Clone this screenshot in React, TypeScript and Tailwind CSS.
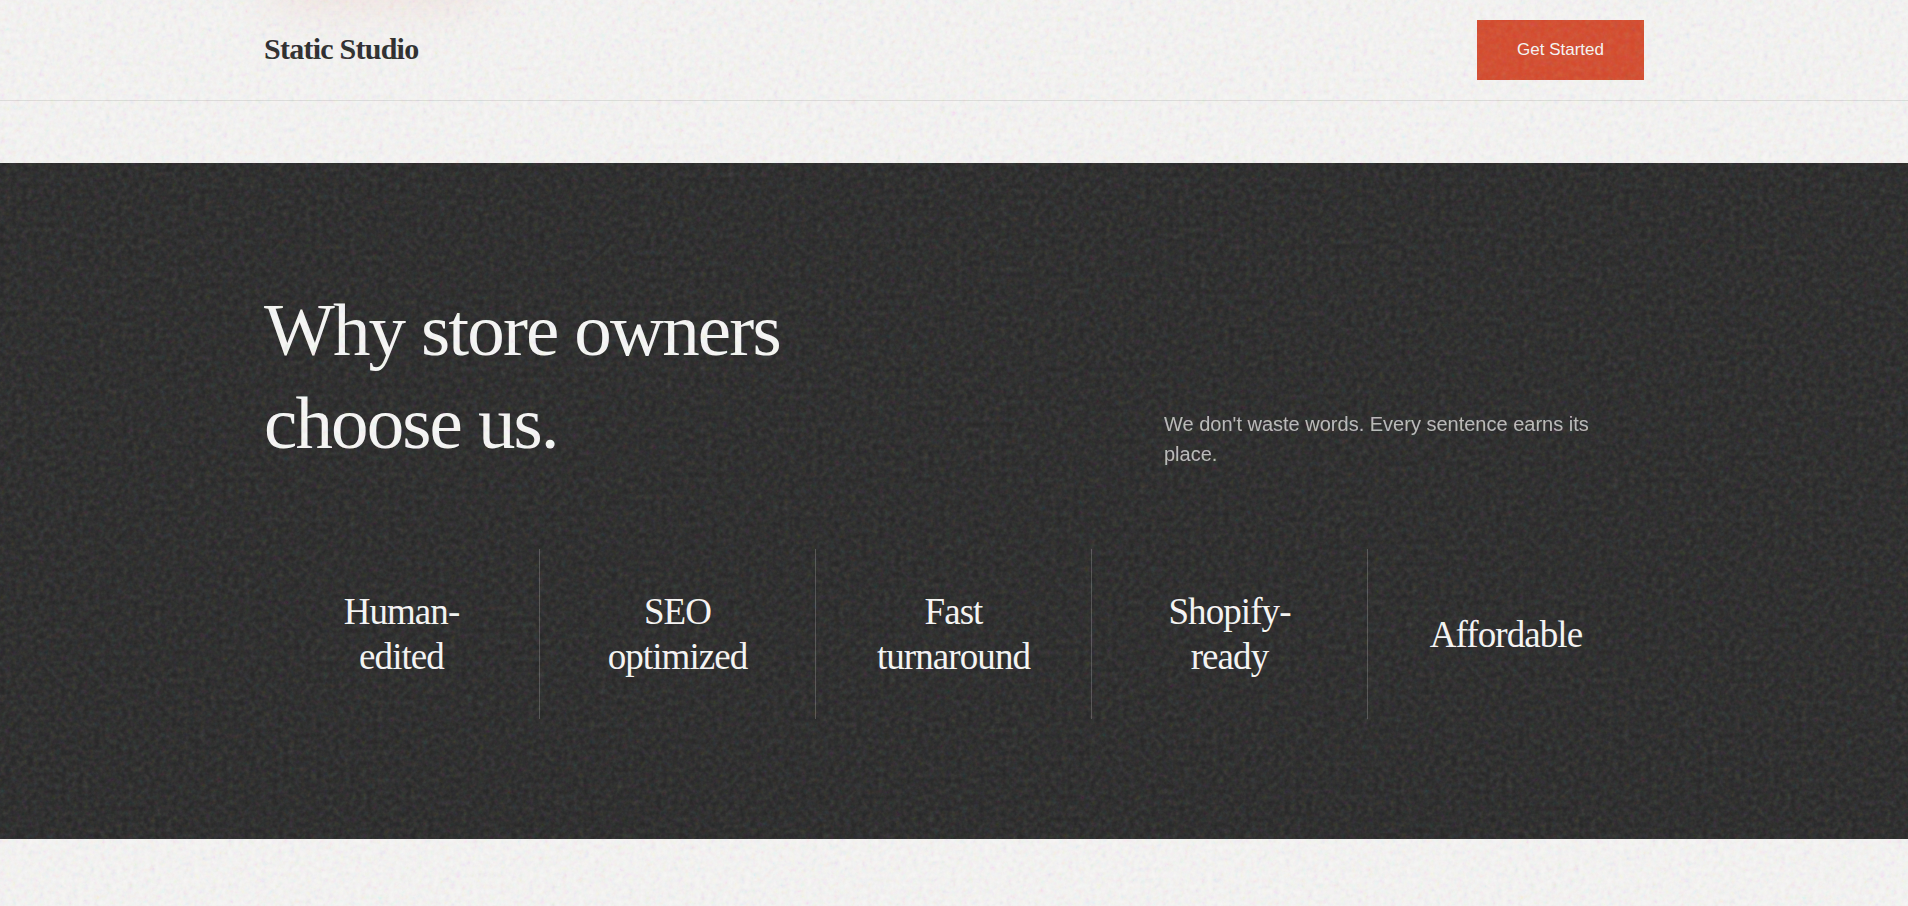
const features = [
  "Human-edited",
  "SEO optimized",
  "Fast turnaround",
  "Shopify-ready",
  "Affordable",
];

function Grain() {
  return (
    <svg
      aria-hidden="true"
      className="pointer-events-none fixed inset-0 z-50 h-full w-full opacity-[0.13]"
    >
      <filter id="grain" x="0" y="0" width="100%" height="100%">
        <feTurbulence
          type="fractalNoise"
          baseFrequency="0.18"
          numOctaves={3}
          stitchTiles="stitch"
        />
        {/* spread the noise so it reads on the dark section too */}
        <feComponentTransfer>
          <feFuncR type="linear" slope="1.3" intercept="-0.15" />
          <feFuncG type="linear" slope="1.3" intercept="-0.15" />
          <feFuncB type="linear" slope="1.3" intercept="-0.15" />
          <feFuncA type="linear" slope="1.4" intercept="-0.2" />
        </feComponentTransfer>
      </filter>
      <rect width="100%" height="100%" filter="url(#grain)" />
    </svg>
  );
}

function Header() {
  return (
    <header className="relative overflow-hidden border-b border-[#dededc]">
      {/* soft glow behind the bar */}
      <div className="absolute -top-13 left-66 h-14 w-56 rounded-full bg-[#d94a2b]/10 blur-xl" />
      <div className="relative mx-auto flex h-25 max-w-[1380px] items-center justify-between">
        <a
          href="#"
          className="pb-0.5 font-['Liberation_Serif',serif] text-[30px] leading-10 font-bold tracking-tight text-[#2a2a2a]"
        >
          Static Studio
        </a>
        <button
          type="button"
          className="h-15 bg-[#d54a2c] px-10 font-['Liberation_Sans',sans-serif] text-[17px] text-[#f8f8f7]"
        >
          Get Started
        </button>
      </div>
    </header>
  );
}

function WhyUs() {
  return (
    <section className="bg-[#282828] py-30 text-[#f8f8f7]">
      <div className="mx-auto max-w-[1380px]">
        <div className="mb-20 flex items-end justify-between">
          <h2 className="max-w-[600px] font-['Liberation_Serif',serif] text-[75px] leading-[93px] tracking-tight">
            Why store owners choose us.
          </h2>
          <p className="max-w-[480px] font-['Liberation_Sans',sans-serif] text-[20px] leading-[30px] opacity-70">
            We don't waste words. Every sentence earns its place.
          </p>
        </div>
        <ul className="grid grid-cols-5">
          {features.map((feature) => (
            <li
              key={feature}
              className="flex items-center justify-center border-r border-white/20 px-15 py-10 text-center font-['Liberation_Serif',serif] text-[37px] leading-[45px] tracking-tight last:border-r-0"
            >
              {feature}
            </li>
          ))}
        </ul>
      </div>
    </section>
  );
}

export default function App() {
  return (
    <div className="min-h-screen bg-[#f6f5f4]">
      <Header />
      <main className="pt-[62px]">
        <WhyUs />
      </main>
      <Grain />
    </div>
  );
}
